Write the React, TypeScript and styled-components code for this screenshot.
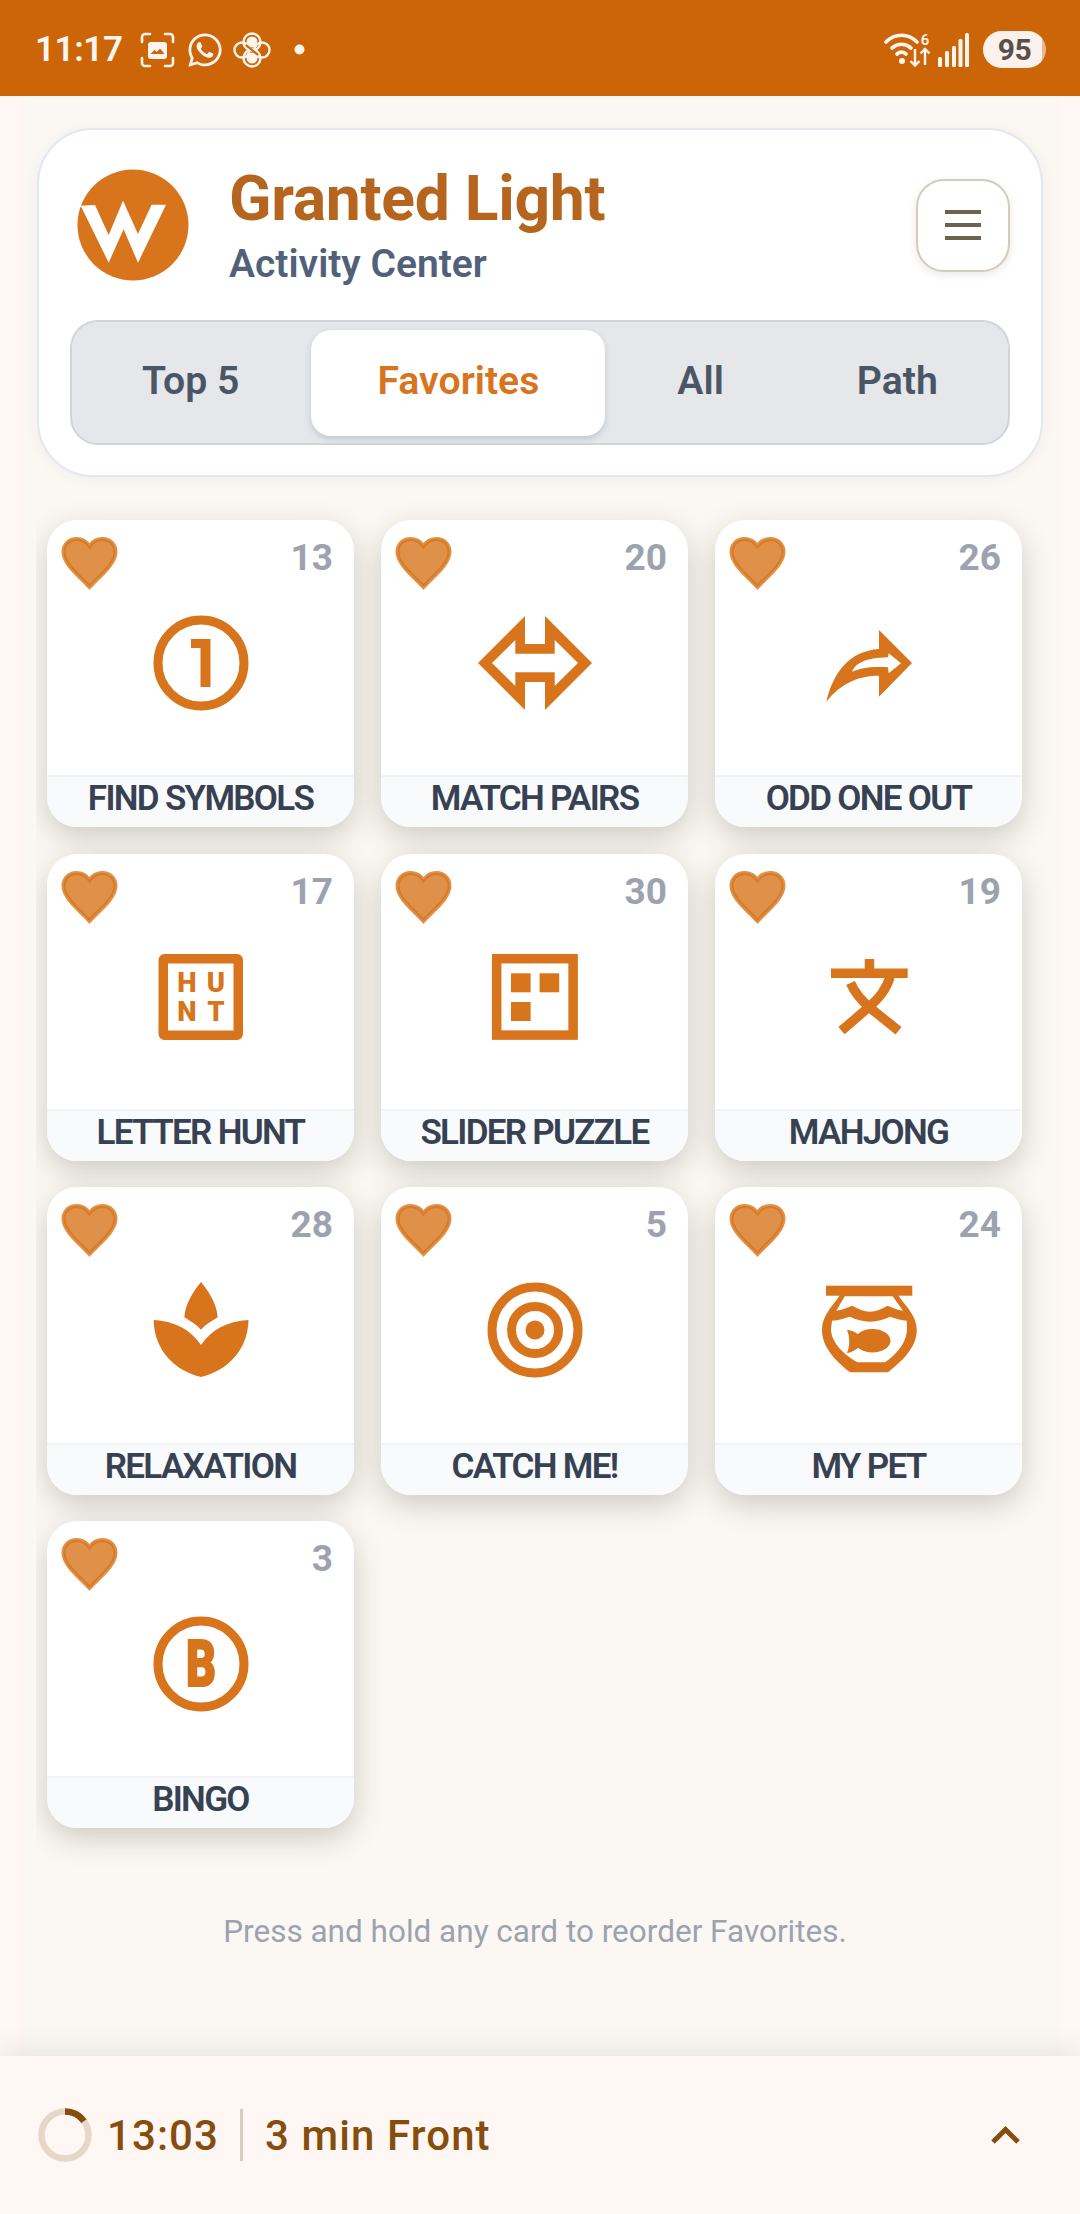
import React from "react";
import styled, { createGlobalStyle } from "styled-components";
import { FaWhatsapp } from "react-icons/fa";

const ORANGE = "#d7741c";

const GlobalStyle = createGlobalStyle`
  html, body {
    margin: 0;
    padding: 0;
    background: #fff7f4;
  }
  * {
    box-sizing: border-box;
  }
  body {
    font-family: Roboto, "Liberation Sans", sans-serif;
  }
`;

const Page = styled.div`
  display: flex;
  flex-direction: column;
  width: 1080px;
  height: 2214px;
  overflow: hidden;
`;

const StatusBar = styled.div`
  display: flex;
  align-items: center;
  justify-content: space-between;
  flex: none;
  height: 96px;
  padding: 3px 34px 0 35px;
  background: #cc6508;
  color: #fdf5ee;
`;

const StatusGroup = styled.div`
  display: flex;
  align-items: center;
`;

const Clock = styled.span`
  width: 105px;
  font-size: 35px;
  font-weight: 600;
  letter-spacing: -0.4px;
`;

const StatusIcon = styled.svg`
  display: block;
  flex: none;
  margin-right: ${(p: { $gap?: number }) => p.$gap ?? 0}px;
`;

const Battery = styled.div`
  display: flex;
  align-items: center;
  justify-content: center;
  width: 63px;
  height: 37px;
  margin-left: 13px;
  border-radius: 19px;
  background: linear-gradient(to right, #fbf2ec 94%, #e7b88f 94%);
  color: #57504d;
  font-size: 30px;
  font-weight: 700;
  letter-spacing: -0.5px;
`;

const Main = styled.main`
  display: flex;
  flex: 1;
  min-height: 0;
  padding: 0 22px 0 20px;
`;

const Panel = styled.div`
  flex: 1;
  min-width: 0;
  padding-top: 32px;
  background: #fbf8f3;
`;

const HeaderCard = styled.header`
  margin: 0 15px 0 17px;
  padding: 39px 31px 30px;
  border: 2px solid #e2e8f0;
  border-radius: 56px;
  background: #fff;
  box-shadow: 0 2px 14px rgba(60, 40, 20, 0.05);
`;

const HeaderRow = styled.div`
  display: flex;
  align-items: center;
  padding-left: 7px;
`;

const Logo = styled.svg`
  display: block;
  flex: none;
  width: 112px;
  height: 112px;
`;

const Titles = styled.div`
  flex: 1;
  min-width: 0;
  margin-left: 40px;
`;

const Title = styled.h1`
  margin: 0;
  color: #b5651d;
  font-size: 62.4px;
  font-weight: 700;
  line-height: 60px;
  letter-spacing: -0.3px;
`;

const Subtitle = styled.div`
  margin-top: 17px;
  margin-bottom: -1px;
  color: #52617a;
  font-size: 39px;
  font-weight: 600;
  line-height: 36px;
`;

const MenuButton = styled.button`
  display: flex;
  flex-direction: column;
  align-items: center;
  justify-content: center;
  gap: 9px;
  flex: none;
  width: 94px;
  height: 93px;
  padding: 0;
  border: 2px solid #d6cbb8;
  border-radius: 28px;
  background: #fff;
  box-shadow: 0 3px 8px rgba(60, 40, 20, 0.1);
`;

const MenuLine = styled.span`
  display: block;
  width: 36px;
  height: 4px;
  background: #6b6250;
`;

const Tabs = styled.nav`
  display: flex;
  gap: 6px;
  height: 125px;
  margin-top: 39px;
  padding: 8px 0 7px 4px;
  border: 2px solid #d1d5db;
  border-radius: 28px;
  background: #e5e7eb;
`;

const Tab = styled.div<{ $active?: boolean }>`
  display: flex;
  align-items: center;
  justify-content: center;
  flex: none;
  padding: 0 66px 4px;
  border-radius: 20px;
  background: ${(p) => (p.$active ? "#fff" : "transparent")};
  box-shadow: ${(p) => (p.$active ? "0 3px 6px rgba(71, 85, 105, 0.22)" : "none")};
  color: ${(p) => (p.$active ? ORANGE : "#4b5563")};
  font-size: 39.2px;
  font-weight: 600;
  white-space: nowrap;

  &:last-child {
    margin-left: -5px;
  }
`;

const GridClip = styled.div`
  margin-top: 19px;
  margin-left: 16px;
  padding: 24px 0 48px 11px;
  overflow: hidden;
`;

const Grid = styled.div`
  display: grid;
  grid-template-columns: repeat(3, 307px);
  grid-auto-rows: 307.4px;
  gap: 26.3px 27px;
`;

const Card = styled.article`
  position: relative;
  display: flex;
  flex-direction: column;
  border-radius: 30px;
  background: #fff;
  box-shadow: 0 10px 30px rgba(50, 40, 25, 0.22);
  overflow: hidden;
`;

const FavHeart = styled.svg`
  position: absolute;
  top: 15px;
  left: 12px;
  width: 61px;
  height: 56px;
`;

const Count = styled.span`
  position: absolute;
  top: 17px;
  right: 21px;
  color: #9ca3af;
  font-size: 37px;
  font-weight: 700;
  line-height: 42px;
`;

const CardBody = styled.div`
  display: flex;
  justify-content: center;
  flex: 1;
  padding-top: 83px;
`;

const CardIcon = styled.svg`
  display: block;
  width: 120px;
  height: 120px;
  color: ${ORANGE};
`;

const CardLabel = styled.div`
  flex: none;
  height: 52px;
  border-top: 2px solid #f1f3f6;
  background: #f8fafc;
  color: #374151;
  font-size: 35px;
  font-weight: 600;
  line-height: 44px;
  letter-spacing: -1.7px;
  text-align: center;
`;

const Hint = styled.p`
  margin: 0;
  padding: 37px 8px 0 0;
  color: #9ca3af;
  font-size: 31.5px;
  line-height: 38px;
  text-align: center;
`;

const TimerBar = styled.footer`
  position: relative;
  display: flex;
  align-items: center;
  flex: none;
  height: 158px;
  padding: 0 58px 0 38px;
  background: #fff7f4;
  box-shadow: 0 -6px 26px rgba(70, 55, 35, 0.1);
  color: #854d0e;
  font-size: 42px;
  font-weight: 500;
  letter-spacing: 1.1px;
`;

const Ring = styled.svg`
  display: block;
  flex: none;
  width: 54px;
  height: 54px;
`;

const TimerValue = styled.span`
  margin-left: 15px;
`;

const TimerDivider = styled.span`
  width: 3px;
  height: 52px;
  margin: 0 22px 0 21px;
  background: #d8cbc0;
`;

const Spacer = styled.span`
  flex: 1;
`;

function ScreenshotIcon() {
  return (
    <StatusIcon $gap={11} width="35" height="36" viewBox="0 0 35 36" fill="none">
      <path
        d="M2 10V5a3 3 0 0 1 3-3h5M25 2h5a3 3 0 0 1 3 3v5M33 26v5a3 3 0 0 1-3 3h-5M10 34H5a3 3 0 0 1-3-3v-5"
        stroke="currentColor"
        strokeWidth="2.6"
        strokeLinecap="round"
      />
      <rect x="8" y="10" width="19" height="17" rx="3" fill="currentColor" />
      <path d="M10.5 22l4-4 2.5 2 3-3.5 4.5 5.5z" fill="#cc6508" />
    </StatusIcon>
  );
}

function FlowerIcon() {
  return (
    <StatusIcon width="38" height="36" viewBox="0 0 38 36" fill="none" $gap={23}>
      <g stroke="currentColor" strokeWidth="2.4">
        <circle cx="19" cy="10" r="8.5" />
        <circle cx="19" cy="26" r="8.5" />
        <circle cx="9" cy="18" r="7.5" />
        <circle cx="29" cy="18" r="7.5" />
      </g>
      <circle cx="19" cy="10" r="5.5" fill="currentColor" />
      <circle cx="19" cy="26" r="5.5" fill="currentColor" />
      <circle cx="9" cy="18" r="3" fill="#cc6508" />
      <circle cx="29" cy="18" r="3" fill="#cc6508" />
      <path d="M13 13l12 10" stroke="#cc6508" strokeWidth="2" />
    </StatusIcon>
  );
}

function WifiIcon() {
  return (
    <StatusIcon width="47" height="36" viewBox="0 0 47 36" fill="none" $gap={7}>
      <g stroke="currentColor" strokeWidth="3.6" strokeLinecap="round">
        <path d="M2 10C11 1 24 1 33 10" />
        <path d="M8 16c6-5 13-5 19 0" />
        <path d="M13 22c3-2.5 6-2.5 9 0" />
      </g>
      <circle cx="18" cy="29" r="3" fill="currentColor" />
      <text x="41" y="13" fontSize="15" fontWeight="600" textAnchor="middle" fill="currentColor">
        6
      </text>
      <g stroke="currentColor" strokeWidth="2.4" fill="none">
        <path d="M31 17v16M26.5 29l4.5 4.5 4.5-4.5" />
        <path d="M41 33V17M36.5 21.5L41 17l4.5 4.5" />
      </g>
    </StatusIcon>
  );
}

function SignalIcon() {
  return (
    <StatusIcon width="32" height="34" viewBox="0 0 32 34" fill="currentColor">
      <rect x="0" y="24" width="4" height="10" rx="1.5" />
      <rect x="7" y="18" width="4" height="16" rx="1.5" />
      <rect x="14" y="13" width="4" height="21" rx="1.5" />
      <rect x="20.5" y="6" width="4" height="28" rx="1.5" />
      <rect x="27" y="0" width="4" height="34" rx="1.5" />
    </StatusIcon>
  );
}

function Glyph({ name }: { name: string }) {
  switch (name) {
    case "find":
      return (
        <>
          <circle cx="60" cy="60" r="43" fill="none" stroke="currentColor" strokeWidth="9" />
          <rect x="59.5" y="36" width="10" height="48" fill="currentColor" />
          <rect x="50" y="36" width="10" height="9" fill="currentColor" />
        </>
      );
    case "pairs":
      return (
        <path
          fill="currentColor"
          fillRule="evenodd"
          d="M3 60L50 13V41H70V13L117 60L70 107V79H50V107ZM17 60L40.3 83V69.3H79.7V83L103 60L79.7 37V50.7H40.3V37Z"
        />
      );
    case "odd":
      return (
        <path
          fill="currentColor"
          fillRule="evenodd"
          d="M70 27L103 60L70 93.7V72.7C50 72.7 32 80 17.3 98.7C24 70 40 48 70 46ZM43 68.7C47 60 56 55 79 54.3L79.7 50.3L92 60.3L79.7 70.3L79 64.3C62 63 52 65 43 68.7Z"
        />
      );
    case "hunt":
      return (
        <>
          <path
            fill="currentColor"
            fillRule="evenodd"
            d="M23.5 17H96a6 6 0 0 1 6 6V97a6 6 0 0 1-6 6H23.5a6 6 0 0 1-6-6V23a6 6 0 0 1 6-6ZM27 26.5V93.5H92.5V26.5Z"
          />
          <g fill="currentColor" fontSize="27.5" fontWeight="900" textAnchor="middle">
            <text x="46" y="55.3">H</text>
            <text x="75" y="55.3">U</text>
            <text x="46" y="84">N</text>
            <text x="75" y="84">T</text>
          </g>
        </>
      );
    case "slider":
      return (
        <>
          <rect x="21.7" y="21.7" width="76.4" height="76.4" fill="none" stroke="currentColor" strokeWidth="9.5" />
          <rect x="36" y="36.3" width="19.6" height="19" fill="currentColor" />
          <rect x="64.6" y="36.3" width="19.6" height="19" fill="currentColor" />
          <rect x="36" y="65" width="19.6" height="19" fill="currentColor" />
        </>
      );
    case "mahjong":
      return (
        <g fill="none" stroke="currentColor" strokeWidth="9.5">
          <path d="M22 36.2H98.7M60.5 22V36" />
          <path d="M41.5 46C46 56 52 63 60 70L89.5 93.7" />
          <path d="M81 40C77 53 70 61 60 70L32.5 93.7" />
        </g>
      );
    case "relax":
      return (
        <g fill="currentColor">
          <path d="M60 12C52 22 44 34 43.4 47.3C49 51 55 54 60 59.7C65 54 71 51 76.6 47.3C76 34 68 22 60 12Z" />
          <path d="M12.7 50C34 51 50 60 60 75C70 60 86 51 107.5 50C107 80 86 101 60 107C34 101 13 80 12.7 50Z" />
        </g>
      );
    case "catch":
      return (
        <>
          <circle cx="60" cy="60" r="43" fill="none" stroke="currentColor" strokeWidth="9" />
          <circle cx="60" cy="60" r="23.5" fill="none" stroke="currentColor" strokeWidth="9" />
          <circle cx="60" cy="60" r="9.5" fill="currentColor" />
        </>
      );
    case "pet":
      return (
        <g fill="currentColor">
          <rect x="17" y="15.7" width="86.3" height="10" />
          <path
            fillRule="evenodd"
            d="M31 25C22 38 13 46 13 60C13 78 28 92 41 102.3H79C92 92 107.8 78 107.8 60C107.8 46 98 38 89 25ZM35.8 26.3H83.6L94 40.7C88 40 84 37.5 78.6 35.7C73 39 67 41.7 61 41.7C55 41.7 49 39 43.3 35.7C38 37.5 33 40 27.2 40.7ZM23 50.7C30 50.5 35 48.5 40.8 46.7C47 49.5 54 51.7 61 51.7C68 51.7 75 49.5 81 46.7C86 48.5 92 50.5 97.7 50.7L98 59C98 72 88 84 76 92.3H48.4C34 84 22 72 22 59Z"
          />
          <ellipse cx="63.5" cy="70.7" rx="18" ry="11.7" />
          <path d="M38 60C42 60 46 62 52 66L52 76C46 80 42 83 38 83C41 76 41 67 38 60Z" />
        </g>
      );
    case "bingo":
      return (
        <>
          <circle cx="60" cy="60" r="43" fill="none" stroke="currentColor" strokeWidth="9" />
          <text
            x="60"
            y="82"
            fontSize="64"
            fontWeight="900"
            fill="currentColor"
            stroke="currentColor"
            strokeWidth="2"
            textAnchor="middle"
            textLength="30"
            lengthAdjust="spacingAndGlyphs"
          >
            B
          </text>
        </>
      );
    default:
      return null;
  }
}

const activities = [
  { icon: "find", label: "FIND SYMBOLS", count: 13 },
  { icon: "pairs", label: "MATCH PAIRS", count: 20 },
  { icon: "odd", label: "ODD ONE OUT", count: 26 },
  { icon: "hunt", label: "LETTER HUNT", count: 17 },
  { icon: "slider", label: "SLIDER PUZZLE", count: 30 },
  { icon: "mahjong", label: "MAHJONG", count: 19 },
  { icon: "relax", label: "RELAXATION", count: 28 },
  { icon: "catch", label: "CATCH ME!", count: 5 },
  { icon: "pet", label: "MY PET", count: 24 },
  { icon: "bingo", label: "BINGO", count: 3 },
];

const App: React.FC = () => {
  return (
    <Page>
      <GlobalStyle />
      <StatusBar>
        <StatusGroup>
          <Clock>11:17</Clock>
          <ScreenshotIcon />
          <FaWhatsapp size={38} style={{ marginRight: 9 }} />
          <FlowerIcon />
          <StatusIcon width="11" height="11" viewBox="0 0 11 11" fill="currentColor">
            <circle cx="5.5" cy="5.5" r="5" />
          </StatusIcon>
        </StatusGroup>
        <StatusGroup>
          <WifiIcon />
          <SignalIcon />
          <Battery>95</Battery>
        </StatusGroup>
      </StatusBar>

      <Main>
        <Panel>
          <HeaderCard>
            <HeaderRow>
              <Logo viewBox="0 0 112 112">
                <circle cx="56" cy="56" r="55.5" fill={ORANGE} />
                <polygon
                  fill="#fff"
                  points="3.7,36.7 18,36 31.7,66 46,31.7 61,65 74.6,35.7 89,35.7 61,93.7 46.6,60.3 31.7,93.7"
                />
              </Logo>
              <Titles>
                <Title>Granted Light</Title>
                <Subtitle>Activity Center</Subtitle>
              </Titles>
              <MenuButton aria-label="Menu">
                <MenuLine />
                <MenuLine />
                <MenuLine />
              </MenuButton>
            </HeaderRow>
            <Tabs>
              <Tab>Top 5</Tab>
              <Tab $active>Favorites</Tab>
              <Tab>All</Tab>
              <Tab>Path</Tab>
            </Tabs>
          </HeaderCard>

          <GridClip>
            <Grid>
              {activities.map((a) => (
                <Card key={a.label}>
                  <CardBody>
                    <CardIcon viewBox="0 0 120 120">
                      <Glyph name={a.icon} />
                    </CardIcon>
                  </CardBody>
                  <CardLabel>{a.label}</CardLabel>
                  <FavHeart viewBox="0 0 60 56">
                    <path
                      d="M30 52C20 41 4 29 4 17C4 9 10 4 17 4C22 4 27 6.5 30 11C33 6.5 38 4 43 4C50 4 56 9 56 17C56 29 40 41 30 52Z"
                      fill={ORANGE}
                      fillOpacity="0.8"
                      stroke={ORANGE}
                      strokeOpacity="0.8"
                      strokeWidth="4"
                    />
                  </FavHeart>
                  <Count>{a.count}</Count>
                </Card>
              ))}
            </Grid>
          </GridClip>

          <Hint>Press and hold any card to reorder Favorites.</Hint>
        </Panel>
      </Main>

      <TimerBar>
        <Ring viewBox="0 0 54 54" fill="none">
          <circle cx="27" cy="27" r="23.5" stroke="#e6d8c8" strokeWidth="6.5" />
          <path d="M27 3.5A23.5 23.5 0 0 1 46 13.2" stroke="#854d0e" strokeWidth="6.5" />
        </Ring>
        <TimerValue>13:03</TimerValue>
        <TimerDivider />
        <span>3 min Front</span>
        <Spacer />
        <svg width="32" height="20" viewBox="0 0 32 20" fill="none">
          <path d="M3 17L15.5 4.5L28 17" stroke="#854d0e" strokeWidth="5" />
        </svg>
      </TimerBar>
    </Page>
  );
};

export default App;
